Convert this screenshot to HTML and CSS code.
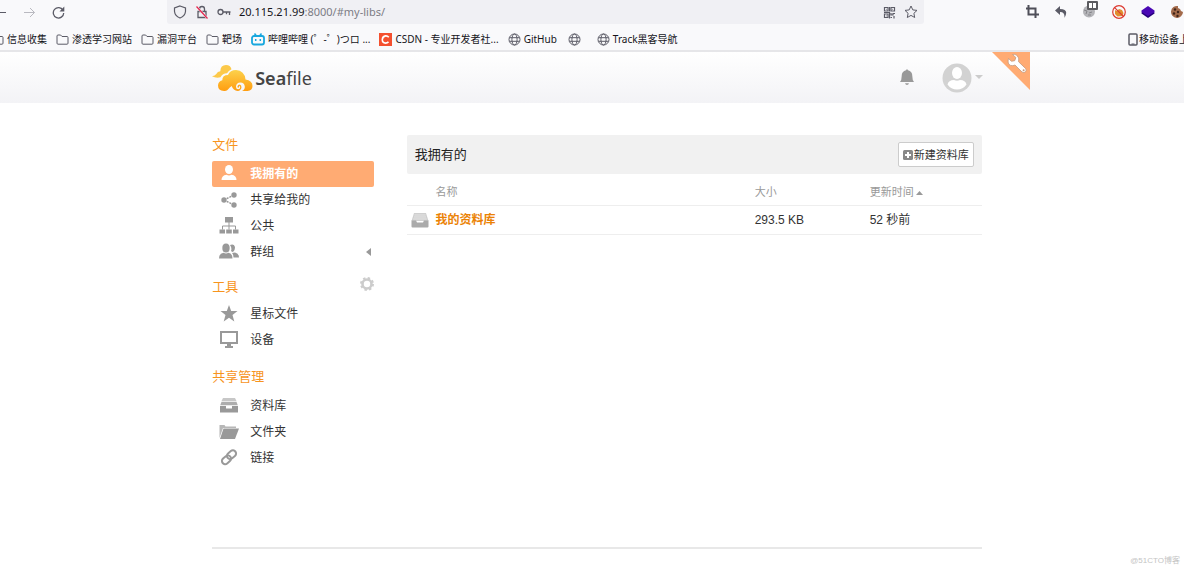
FILE: index.html
```html
<!DOCTYPE html>
<html lang="zh-CN">
<head>
<meta charset="utf-8">
<title>Seafile</title>
<link rel="stylesheet" href="styles.css">
</head>
<body>
<svg class="defs" aria-hidden="true">
  <symbol id="folder" viewBox="0 0 13 13"><path d="M1 10.2V3q0-1 1-1h2.600l1.400 1.500H11q1 0 1 1v5.700q0 1-1 1H2q-1 0-1-1z" fill="none" stroke="#5b5b66"/></symbol>
  <symbol id="globe" viewBox="0 0 13 13"><g fill="none" stroke="#5b5b66"><circle cx="6.500" cy="6.500" r="5.500"/><ellipse cx="6.500" cy="6.500" rx="2.600" ry="5.500"/><path d="M1.500 4.700h10M1.500 8.300h10"/></g></symbol>
</svg>

<div class="browser">
  <div class="toolbar">
    <div class="nav">
      <button class="icon-btn" aria-label="后退"><svg width="13" height="13" viewBox="0 0 13 13"><path d="M12 6.500H1.500M6 2L1.500 6.500 6 11" fill="none" stroke="#5b5b66"/></svg></button>
      <button class="icon-btn" aria-label="前进"><svg width="13" height="13" viewBox="0 0 13 13"><path d="M1 6.500h10.500M7 2l4.500 4.500L7 11" fill="none" stroke="#b9b9c0"/></svg></button>
      <button class="icon-btn" aria-label="刷新"><svg width="13" height="13" viewBox="0 0 13 13"><path d="M11 4.200A5.200 5.200 0 1 0 11.700 7" fill="none" stroke="#5b5b66" stroke-width="1.300"/><path d="M12.300.500v5H7.500z" fill="#5b5b66"/></svg></button>
    </div>
    <div class="urlbar">
      <svg width="14" height="14" viewBox="0 0 14 14"><path d="M7 1l5.500 2v3.500Q12 11 7 13 2 11 1.500 6.500V3z" fill="none" stroke="#5b5b66" stroke-width="1.200"/></svg>
      <svg width="14" height="14" viewBox="0 0 14 14"><path d="M4.500 6.500V4a2.500 2.500 0 0 1 5 0v2.500M3 6.500h8v6H3z" fill="none" stroke="#5b5b66" stroke-width="1.300"/><path d="M1.500 1.500l11 12" stroke="#f9f9fb" stroke-width="2"/><path d="M1.500 1.500l11 12" stroke="#e22850" stroke-width="1.300"/></svg>
      <svg width="14" height="14" viewBox="0 0 14 14"><g fill="none" stroke="#5b5b66" stroke-width="1.300"><circle cx="3.500" cy="7" r="2.500"/><path d="M6 7h7.500M9.500 7v2.200M12.500 7v3"/></g></svg>
      <span class="url">20.115.21.99<span class="url-rest">:8000/#my-libs/</span></span>
      <svg width="13" height="13" viewBox="0 0 13 13"><g fill="none" stroke="#5b5b66" stroke-width="1.200"><path d="M1.500 1.500h3.500V5H1.500zM8 1.500h3.500V5H8zM1.500 8h3.500v3.500H1.500z"/><path d="M8 7v2h2V7.500h2M7.500 11.500H9M11 10v2.500M6.500 1v4.500M1 6.500h5.500v6M3 3.300h.5M9.500 3.300h.5M3 9.800h.5" /></g></svg>
      <svg width="14" height="14" viewBox="0 0 14 14"><path d="M7 1l1.800 3.900 4.200.5-3.100 2.900.8 4.200L7 10.400l-3.700 2.100.8-4.200L1 5.400l4.200-.5z" fill="none" stroke="#5b5b66" stroke-linejoin="round"/></svg>
    </div>
    <div class="extensions">
      <svg width="14" height="14" viewBox="0 0 14 14"><path d="M3.500 0v9.500H14M1 3.500h9.500V13" fill="none" stroke="#4f4f59" stroke-width="2"/></svg>
      <svg width="14" height="14" viewBox="0 0 14 14"><path d="M6 1L1 5.500 6 10V7q5-.2 4.500 6 5-9-4.500-9z" fill="#5b5b66"/></svg>
      <svg class="ext-badged" width="18" height="20" viewBox="0 0 18 20"><circle cx="8" cy="12.500" r="6" fill="#b4b4b8"/><path d="M3 11l3 1-1 3M8 14l3-1M7 16h3" stroke="#858589" fill="none"/><rect x="6" y="2" width="11" height="9" rx="1" fill="#5b5b5f"/><path d="M8 4h3v5H8zM12 4h3v5h-3z" fill="#fff"/></svg>
      <svg width="14" height="14" viewBox="0 0 14 14"><path d="M3 5l2 1 2-2 3 1 1.500 3-1 3-5 .5L3 9z" fill="#e0902e"/><circle cx="7" cy="7" r="6.300" fill="none" stroke="#dc3a30" stroke-width="1.200"/><path d="M2.600 2.600l8.800 8.800" stroke="#dc3a30" stroke-width="1.200"/></svg>
      <svg width="14" height="14" viewBox="0 0 14 14"><path d="M.500 7.500L7 4l6.500 3.500v1L7 13 .500 8.500z" fill="#25007a"/><path d="M7 1l6.500 4.500v1.500L7 11 .500 7V5.500z" fill="#4a08b4"/></svg>
      <svg width="14" height="14" viewBox="0 0 14 14"><path d="M8 1a6 6 0 1 0 5 6L11 6 10 4 8 3z" fill="#a36b4b"/><g fill="#3f2419"><circle cx="5" cy="4.500" r="1.200"/><circle cx="4" cy="8.500" r="1.200"/><circle cx="8" cy="7" r="1.200"/><circle cx="7.500" cy="11" r="1.200"/></g></svg>
    </div>
  </div>
  <nav class="bookmarks" aria-label="书签">
    <a href="#"><svg width="13" height="13"><use href="#folder"/></svg>信息收集</a>
    <a href="#"><svg width="13" height="13"><use href="#folder"/></svg>渗透学习网站</a>
    <a href="#"><svg width="13" height="13"><use href="#folder"/></svg>漏洞平台</a>
    <a href="#"><svg width="13" height="13"><use href="#folder"/></svg>靶场</a>
    <a href="#"><svg width="14" height="13" viewBox="0 0 14 13"><rect x="1" y="3" width="12" height="8.500" rx="2" fill="none" stroke="#18a7de" stroke-width="1.800"/><path d="M3.500.500L5.500 3M10.500.500L8.500 3M4.700 6v2M9.300 6v2" stroke="#18a7de" stroke-width="1.500"/></svg>哔哩哔哩 (゜-゜)つロ ...</a>
    <a href="#"><svg width="13" height="13" viewBox="0 0 13 13"><path d="M0 0h13v13H0z" fill="#f4502f"/><path d="M9.800 4.200Q8.500 2.700 6.500 2.900 3.600 3.300 3.300 6.500q0 3.600 3.200 3.600 1.800 0 3-1.200" fill="none" stroke="#fff" stroke-width="1.600"/></svg>CSDN - 专业开发者社...</a>
    <a href="#"><svg width="13" height="13"><use href="#globe"/></svg>GitHub</a>
    <a class="untitled" href="#" aria-label="书签"><svg width="13" height="13"><use href="#globe"/></svg></a>
    <a href="#"><svg width="13" height="13"><use href="#globe"/></svg>Track黑客导航</a>
    <a class="mobile" href="#"><svg width="10" height="13" viewBox="0 0 10 13"><rect x="1" y="1" width="8" height="11" rx="1" fill="none" stroke="#5b5b66" stroke-width="1.500"/><path d="M3.500 11h3" stroke="#5b5b66"/></svg>移动设备上</a>
  </nav>
</div>

<header class="site-header">
  <div class="container header-inner">
    <a class="logo" href="#">
      <svg width="41" height="28" viewBox="0 0 41 28">
        <defs><linearGradient id="cloud" x1="0" y1="0" x2="0" y2="1"><stop offset="0" stop-color="#fcd24c"/><stop offset="1" stop-color="#ff9d10"/></linearGradient></defs>
        <path d="M0 12.300q3-.300 4.300-2.300Q5.500 7.500 8.300 7.200 8.500 1 14 1q4.500 0 5.500 4.300-3 1.500-4.500 4-4.500.2-6.500 4Q4 14.500 0 12.300z" fill="#fcc94a"/>
        <path d="M12 27q-6-.300-6-5.500 0-4 4.300-5.200 0-5.300 5.700-5.300 2-5 8-5 8.500.500 9.500 9.500 7 1 7 6.500 0 4.500-5 5H30q3-1.500 2.800-4.500-.500-4-4.300-4-4.500.2-4.500 4.200 0 2.600 2.300 2.600 1.900-.1 1.900-2-.2-1.200-1.200-1.300.500 1.800-.7 1.800-1-.1-.900-1.300.4-1.900 2.100-1.900 2 .3 2 2.600-.4 3.300-3.800 3.800-4.500-.4-6-5Q18 23 15.500 26q-1.500 1.300-3.500 1z" fill="url(#cloud)"/>
      </svg>
      <span class="logo-text"><b>Sea</b>file</span>
    </a>
    <div class="account">
      <button class="icon-btn" aria-label="通知"><svg width="14" height="17" viewBox="0 0 14 17"><path d="M7 0l1 1.300q4.300 1 4.300 5.700 0 4 1.700 6H0q1.700-2 1.700-6Q1.700 2.300 6 1.300zM5 14.200h4Q8.500 16 7 16t-2-1.800z" fill="#999"/></svg></button>
      <button class="icon-btn avatar" aria-label="账户"><svg width="30" height="30" viewBox="0 0 30 30"><circle cx="15" cy="15" r="14.500" fill="#d2d2d2"/><ellipse cx="15" cy="10" rx="5" ry="6" fill="#fff"/><path d="M5.500 21.500q1-4.500 6.500-4.500 3 1.600 6 0 5.500 0 6.500 4.500Q21 26.500 15 26.500t-9.500-5z" fill="#fff"/></svg><svg width="8" height="5" viewBox="0 0 8 5"><path d="M0 0h8L4 4z" fill="#ccc"/></svg></button>
    </div>
    <a class="admin-ribbon" href="#" aria-label="系统管理"><svg width="38" height="38" viewBox="0 0 38 38"><path d="M0 0h38v38z" fill="#ffab73"/><path d="M20.500 2.500l3.400 3-1.200 3.200-3.300.6-2.900-2.900Q15 12 18.500 13.400q2.500.8 4.500-.4l7 7q2 1.300 3.500-.2 1.500-1.700 0-3.400L26.500 9.700Q27.800 5.600 24.700 3.200 22.700 1.900 20.500 2.500z" fill="#fff" stroke="#c59a7e" stroke-width=".8"/><circle cx="31.600" cy="18.300" r="1" fill="#c59a7e"/></svg></a>
  </div>
</header>

<div class="container content">
  <aside class="sidebar">
    <section>
      <h2>文件</h2>
      <ul>
        <li class="active"><a href="#"><svg width="20" height="18" viewBox="0 0 20 18"><ellipse cx="10" cy="4.500" rx="4" ry="4.500"/><path d="M2.500 15q0-4.500 5-5.200 2.500 1.300 5 0 5 .7 5 5.200z"/></svg>我拥有的</a></li>
        <li><a href="#"><svg width="20" height="18" viewBox="0 0 20 18"><circle cx="5" cy="9" r="2.700"/><circle cx="15" cy="4" r="2.700"/><circle cx="15" cy="14" r="2.700"/><path d="M5 9l10-5M5 9l10 5" stroke="#999" stroke-width="1.500" stroke-dasharray="2 1"/></svg>共享给我的</a></li>
        <li><a href="#"><svg width="20" height="18" viewBox="0 0 20 18"><path d="M6 0h8v5.500H6zM.5 12.500h5.500v4H.5zM7.200 12.500h5.600v4H7.200zM14 12.500h5.500v4H14z"/><path d="M10 5v7.500M3.500 12.500V9h13v3.500" fill="none" stroke="#999"/></svg>公共</a></li>
        <li><a href="#"><svg width="20" height="18" viewBox="0 0 20 18"><ellipse cx="7" cy="5" rx="3.700" ry="4.500"/><path d="M0 15.500q0-5 4.500-5.700 2.500 1.300 5 0 4 .7 4 5.700zM11 2q4-1.500 5 2-.1 4.500-2.700 5L12 8q1.200-3-1-6zM13 10l3-.5q4 .8 4 5h-5.500Q14.400 11.500 13 10z"/></svg>群组<svg class="expand" width="5" height="8" viewBox="0 0 5 8"><path d="M5 0v8L0 4z"/></svg></a></li>
      </ul>
    </section>
    <section class="tools">
      <h2>工具<button class="icon-btn" aria-label="设置"><svg width="14" height="14" viewBox="0 0 14 14"><g fill="none" stroke="#ccc"><circle cx="7" cy="7" r="4.500" stroke-width="2.600"/><circle cx="7" cy="7" r="6" stroke-width="2" stroke-dasharray="2.400 2.310"/></g></svg></button></h2>
      <ul>
        <li><a href="#"><svg width="20" height="18" viewBox="0 0 20 18"><path d="M10 0l2.200 6H18.500l-5 4 1.800 6.500L10 12.800 4.700 16.500 6.500 10l-5-4h6.300z"/></svg>星标文件</a></li>
        <li><a href="#"><svg width="20" height="18" viewBox="0 0 20 18"><path d="M2 1h16v11H2z" fill="none" stroke="#999" stroke-width="2"/><path d="M2 11h16v2H2zM8 12h4v3h2v2H6v-2h2z"/></svg>设备</a></li>
      </ul>
    </section>
    <section>
      <h2>共享管理</h2>
      <ul>
        <li><a href="#"><svg width="20" height="18" viewBox="0 0 20 18"><path d="M4 1h12l1.500 3h-15z" opacity=".55"/><path d="M2.500 4.800h15l1.300 3.400H1.200z" opacity=".8"/><path d="M1 9h6v2.500h6V9h6v6.500H1z"/></svg>资料库</a></li>
        <li><a href="#"><svg width="20" height="18" viewBox="0 0 20 18"><path d="M.500 15V2h5l1 1.500H17V5H4z" opacity=".7"/><path d="M4.500 5.500H20L16 16H1z"/></svg>文件夹</a></li>
        <li><a href="#"><svg width="20" height="18" viewBox="0 0 20 18"><g fill="none" stroke="#999" stroke-width="2"><rect x="-5" y="-3.200" width="10" height="6.400" rx="3.200" transform="translate(12.500 5.700) rotate(-40)"/><rect x="-5" y="-3.200" width="10" height="6.400" rx="3.200" transform="translate(7.500 10.800) rotate(-40)"/></g></svg>链接</a></li>
      </ul>
    </section>
  </aside>

  <main>
    <div class="panel-head">
      <h1>我拥有的</h1>
      <button class="new-lib"><svg width="10" height="10" viewBox="0 0 10 10"><rect width="10" height="10" rx="1.500" fill="#888"/><path d="M5 2v6M2 5h6" stroke="#fff" stroke-width="2"/></svg>新建资料库</button>
    </div>
    <table>
      <thead>
        <tr><th class="col-icon"></th><th class="col-name">名称</th><th class="col-size">大小</th><th>更新时间<svg class="sort" width="7" height="4" viewBox="0 0 7 4"><path d="M0 4h7L3.500 0z" fill="#999"/></svg></th></tr>
      </thead>
      <tbody>
        <tr><td class="lib-icon"><svg width="18" height="16" viewBox="0 0 18 16"><path d="M3 1h12l2.500 8H.5z" fill="#cfcfcf"/><path d="M3.500 3h11M3 5h12M2.300 7h13.400" stroke="#e4e4e4"/><path d="M.5 8.500h4.500l1 2h6l1-2h4.500v6q0 1-1 1h-15q-1 0-1-1z" fill="#aaa"/></svg></td><td><a href="#">我的资料库</a></td><td>293.5 KB</td><td>52 秒前</td></tr>
      </tbody>
    </table>
  </main>
</div>

<footer>
  <div class="container"><hr></div>
  <p>@51CTO博客</p>
</footer>
</body>
</html>
```
FILE: styles.css
```css
* { box-sizing: border-box; }

body {
  margin: 0;
  min-height: 100vh;
  display: flex;
  flex-direction: column;
  background: #fff;
  color: #333;
  font: 12px/20px "Liberation Sans", "Noto Sans CJK SC", sans-serif;
  overflow-x: hidden;
}

a { color: inherit; text-decoration: none; }
svg { flex: none; }
ul, h1, h2, p { margin: 0; padding: 0; }
ul { list-style: none; }

.defs { position: absolute; width: 0; height: 0; }

.icon-btn {
  display: flex;
  align-items: center;
  padding: 0;
  border: 0;
  background: none;
}

/* Browser chrome */
.browser {
  background: #f9f9fb;
  border-bottom: 2px solid #e6e6e9;
  overflow: hidden;
  color: #15141a;
  font-family: "Noto Sans", "Noto Sans CJK SC", sans-serif;
}

.toolbar { display: flex; height: 24px; }

.nav {
  display: flex;
  gap: 16px;
  width: 173px;
  margin-left: -6px;
}

.urlbar {
  flex: 1;
  display: flex;
  align-items: center;
  gap: 8px;
  padding: 0 6px;
  background: #f0f0f4;
  border-radius: 0 0 3px 3px;
}

.url { flex: 1; font-size: 11px; }
.url-rest { color: #7c7c84; }

.extensions {
  display: flex;
  align-items: center;
  gap: 15px;
  width: 260px;
  padding-left: 101px;
}

.ext-badged { margin: -6px -2px 0; }

.bookmarks {
  display: flex;
  align-items: center;
  gap: 9px;
  height: 26px;
  margin-left: -9px;
  padding-top: 4px;
  font-size: 10px;
  line-height: 16px;
  white-space: nowrap;
}

.bookmarks a { display: flex; align-items: center; gap: 3px; }
.bookmarks .untitled { padding: 0 7px 0 2px; }
.bookmarks .mobile { width: 56px; margin-left: auto; gap: 1px; }

/* Site header */
.container {
  position: relative;
  left: 5px;
  width: 65%;
  margin: 0 auto;
}

.site-header { background: linear-gradient(#fff, #f3f3f6); }

.header-inner {
  display: flex;
  align-items: center;
  justify-content: space-between;
  height: 51px;
}

.logo { display: flex; align-items: center; gap: 2px; color: #444; }
.logo-text { font: 18px/24px "Noto Sans", sans-serif; }
.logo-text b { font-weight: 600; }

.account { display: flex; align-items: center; gap: 28px; margin-right: -1px; }
.avatar { gap: 3px; }

.admin-ribbon { position: absolute; top: 0; right: -48px; height: 38px; }

/* Content */
.content {
  flex: 1;
  display: flex;
  gap: 33px;
  padding: 32px 0;
}

.sidebar { flex: 0 0 21%; }
.sidebar section { margin-bottom: 12px; }

.sidebar h2 {
  display: flex;
  justify-content: space-between;
  margin-bottom: 6px;
  color: #f7941d;
  font-size: 13px;
  font-weight: 400;
  line-height: 20px;
}

.sidebar .tools { margin-bottom: 14px; }
.sidebar .tools h2 { height: 20px; margin-bottom: 4px; }
.tools .icon-btn { height: 14px; }

.sidebar li a {
  display: flex;
  align-items: center;
  gap: 11px;
  height: 26px;
  padding: 0 3px 0 7px;
}

.sidebar svg { fill: #999; }
.sidebar .expand { margin-left: auto; }
.sidebar .active a { border-radius: 2px; background: #ffab73; color: #fff; font-weight: 700; }
.sidebar .active svg { fill: #fff; }

main { flex: 1; }

.panel-head {
  display: flex;
  align-items: center;
  justify-content: space-between;
  height: 39px;
  padding: 0 8px;
  border-radius: 2px;
  background: #f1f1f1;
}

.panel-head h1 { font-size: 13px; font-weight: 400; color: #222; }

.new-lib {
  display: flex;
  align-items: center;
  gap: 1px;
  height: 25px;
  padding: 0 4px;
  border: 1px solid #ccc;
  border-radius: 2px;
  background: #fff;
  color: #333;
  font: 11px/16px "Liberation Sans", "Noto Sans CJK SC", sans-serif;
}

table { width: 100%; border-collapse: collapse; table-layout: fixed; }

th, td {
  padding: 0;
  border-bottom: 1px solid #eee;
  text-align: left;
  font-weight: 400;
}

th { height: 31px; padding-top: 6px; color: #999; font-size: 11px; }
td { height: 29px; }
.col-icon { width: 5%; }
.col-name { width: 55.5%; }
.col-size { width: 20%; }
.sort { margin-left: 2px; vertical-align: middle; }
.lib-icon { padding-left: 4px; }
.lib-icon svg { display: block; }
td a { color: #eb8205; font-weight: 700; }

footer hr { margin: 0; border: 0; border-top: 2px solid #e8e8e8; }

footer p {
  padding: 4px 4px 1px;
  color: #c4c4c4;
  font-size: 8px;
  line-height: 15px;
  text-align: right;
}
```
